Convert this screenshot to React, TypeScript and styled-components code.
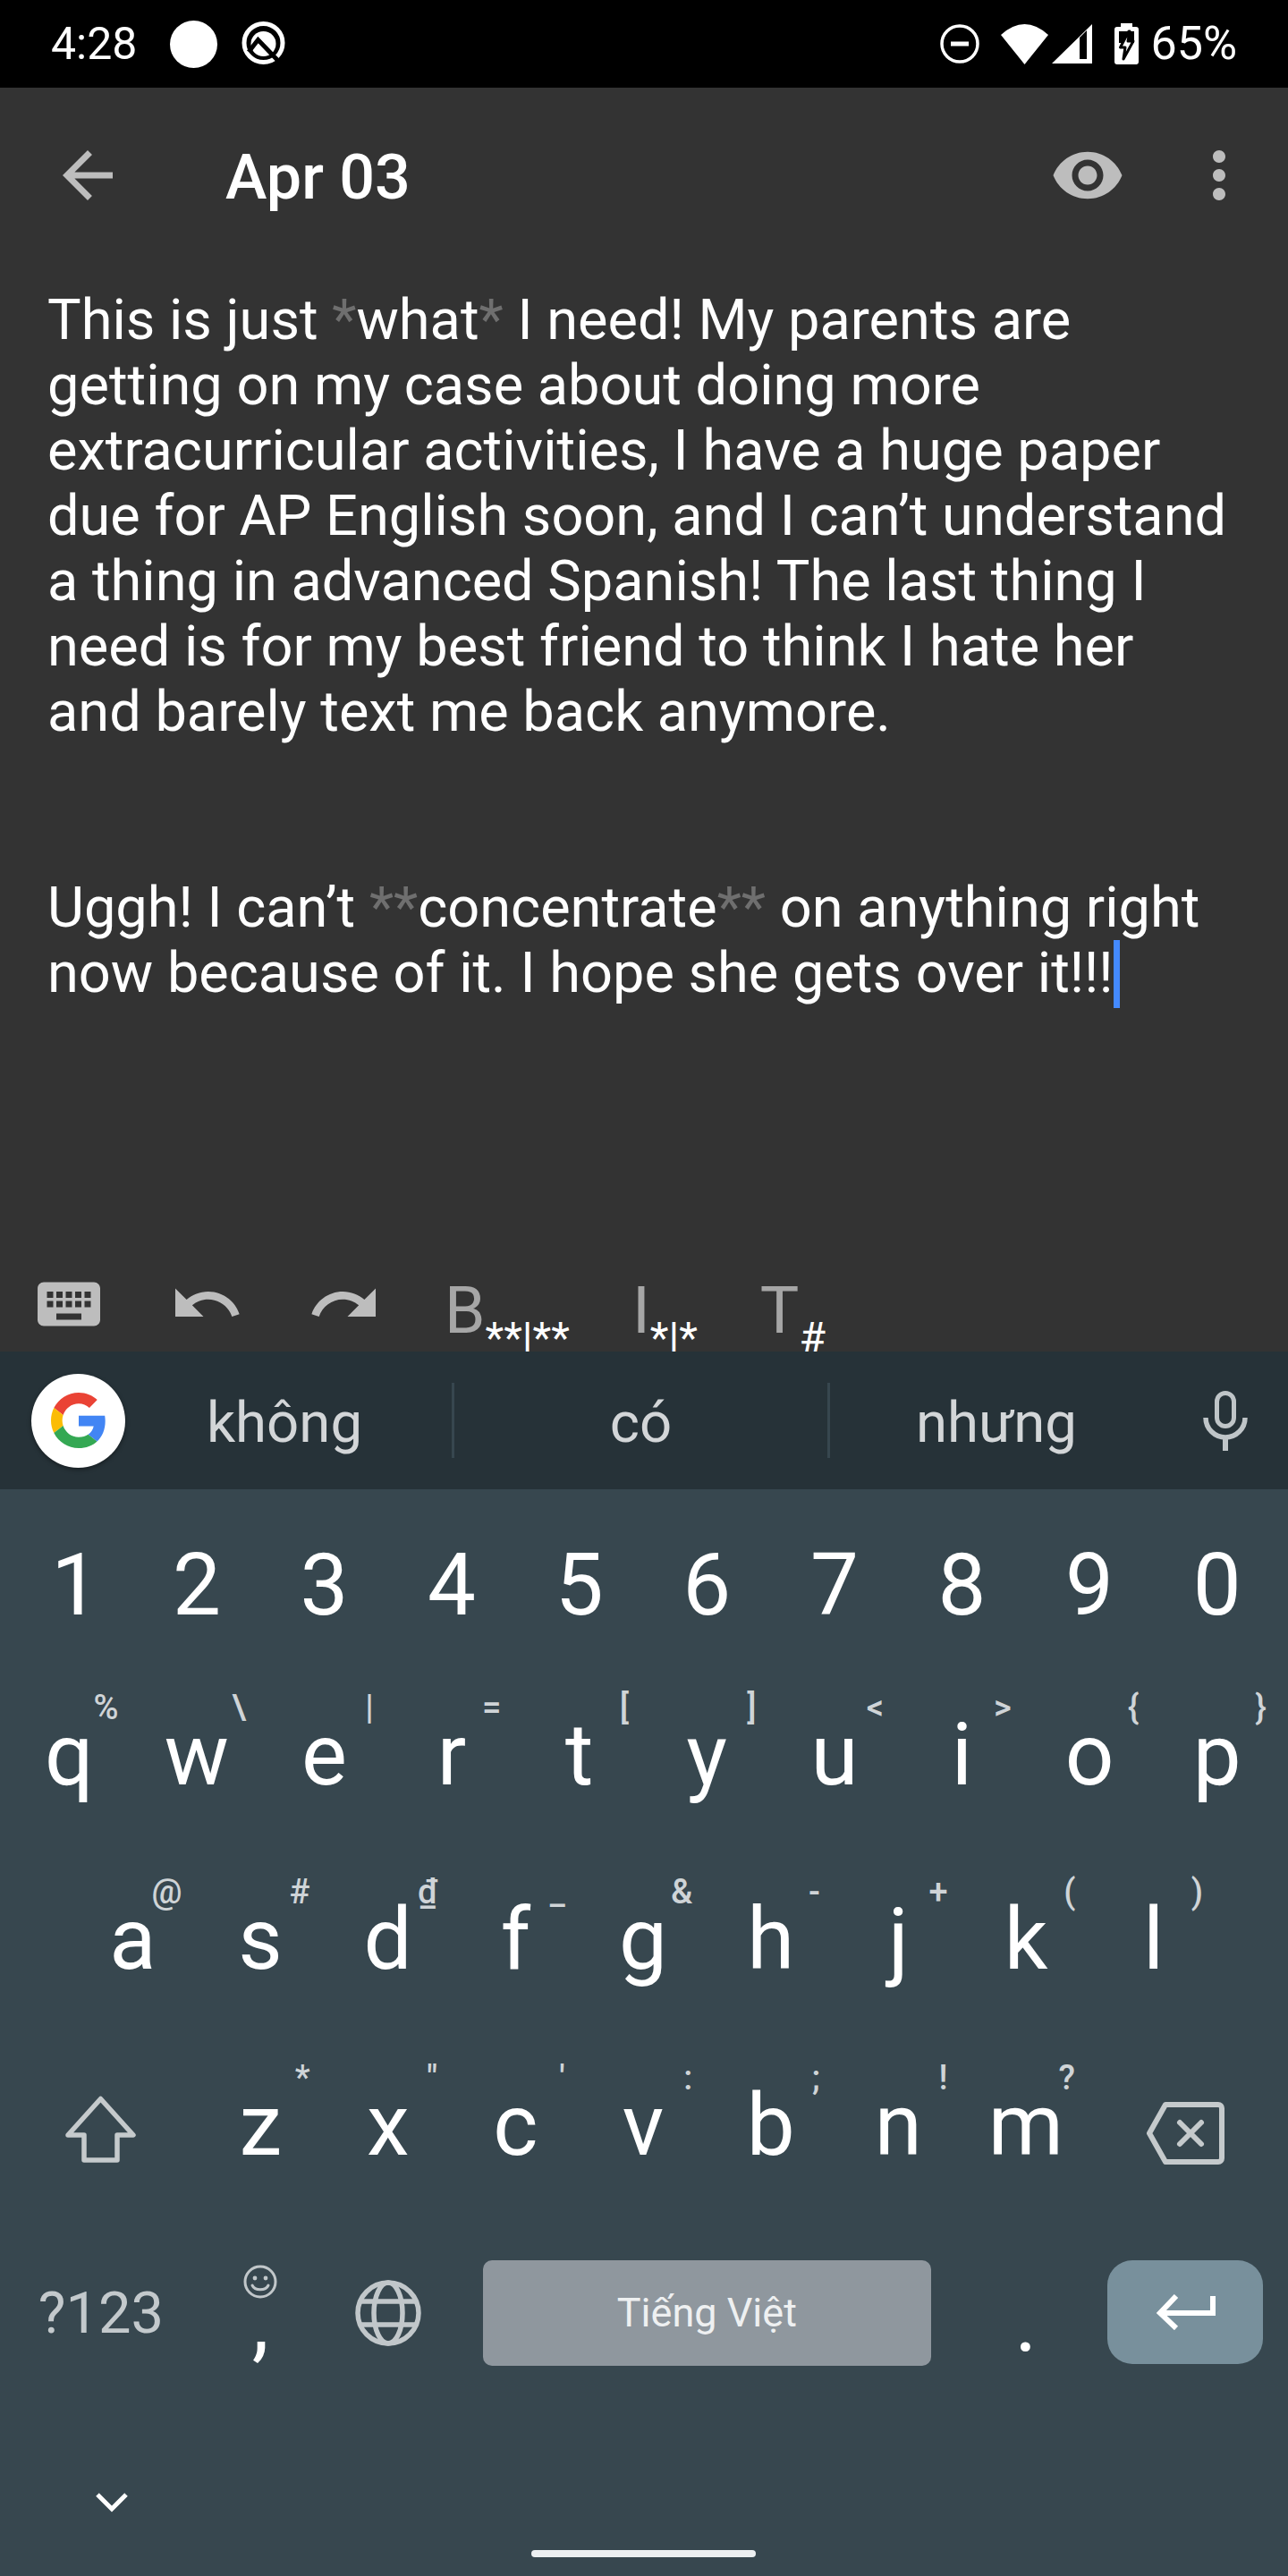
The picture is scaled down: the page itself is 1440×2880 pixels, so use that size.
import React from 'react';
import styled, { createGlobalStyle } from 'styled-components';

const Global = createGlobalStyle`
  html, body { margin: 0; padding: 0; background: #333333; }
  * { box-sizing: border-box; }
  #root { width: 1440px; height: 2880px; }
`;

const Screen = styled.div`
  width: 1440px;
  height: 2880px;
  display: flex;
  flex-direction: column;
  overflow: hidden;
  background: #333333;
  font-family: Roboto, "Noto Sans", sans-serif;
  color: #ffffff;
`;

/* Status bar */
const StatusBar = styled.div`
  height: 98px;
  flex: none;
  background: #000000;
  display: flex;
  align-items: center;
  padding: 0 57px;
`;
const StatusText = styled.span<{ $size?: number; $left?: number }>`
  font-size: ${(p) => p.$size ?? 50}px;
  line-height: 98px;
  margin-left: ${(p) => p.$left ?? 0}px;
`;
const Dot = styled.span`
  width: 53px;
  height: 53px;
  margin-left: 37px;
  border-radius: 50%;
  background: #ffffff;
`;
const StatusGlyph = styled.svg<{ $left?: number }>`
  flex: none;
  display: block;
  margin-left: ${(p) => p.$left ?? 0}px;
`;
const Spacer = styled.div`
  flex: 1;
`;

/* App toolbar */
const Toolbar = styled.div`
  height: 196px;
  flex: none;
  display: flex;
  align-items: center;
  padding: 0 35px 0 56px;
`;
const ToolIcon = styled.svg<{ $left?: number }>`
  width: 84px;
  height: 84px;
  flex: none;
  fill: #bdbdbd;
  margin-left: ${(p) => p.$left ?? 0}px;
`;
const Title = styled.h1`
  margin: 4px 0 0 112px;
  font-size: 70px;
  font-weight: 500;
  line-height: 84px;
`;

/* Editor */
const Editor = styled.div`
  height: 1122px;
  flex: none;
  padding: 27px 0 0 53px;
  font-size: 63.1px;
  line-height: 73px;
`;
const Line = styled.div`
  white-space: pre;
  min-height: 73px;
`;
const Mark = styled.span`
  color: #6f6f6f;
`;
const Caret = styled.span`
  display: inline-block;
  width: 7px;
  height: 76px;
  margin-bottom: -3px;
  vertical-align: top;
  background: #448aff;
`;

/* Formatting bar */
const FormatBar = styled.div`
  height: 95px;
  flex: none;
  display: flex;
  align-items: flex-start;
  gap: 70px;
  padding-left: 35px;
  overflow: hidden;
`;
const FormatIcon = styled.svg`
  width: 84px;
  height: 84px;
  flex: none;
  fill: #bdbdbd;
`;
const FormatGroup = styled.div`
  display: flex;
  align-items: flex-start;
  flex: none;
`;
const FormatLetter = styled.span`
  margin-top: 13px;
  font-size: 73px;
  line-height: 73px;
  color: #a6a6a6;
`;
const FormatSub = styled.span`
  margin-top: 56px;
  font-size: 48px;
  line-height: 48px;
  color: #ffffff;
`;

/* Suggestion strip */
const Strip = styled.div`
  height: 154px;
  flex: none;
  background: #263238;
  display: flex;
  align-items: center;
  padding-left: 35px;
`;
const GoogleBadge = styled.div`
  width: 105px;
  height: 105px;
  flex: none;
  border-radius: 50%;
  background: #ffffff;
  box-shadow: 0 2px 5px rgba(0, 0, 0, 0.4);
  display: flex;
  align-items: center;
  justify-content: center;
`;
const Suggestion = styled.div<{ $width: number; $trail?: number }>`
  width: ${(p) => p.$width}px;
  flex: none;
  padding: 6px ${(p) => p.$trail ?? 0}px 0 0;
  text-align: center;
  font-size: 63.5px;
  line-height: 70px;
  color: #d3d6d8;
`;
const Divider = styled.div`
  width: 3px;
  height: 84px;
  flex: none;
  background: #37474f;
`;

/* Keyboard */
const Keyboard = styled.div`
  height: 1215px;
  flex: none;
  background: #37474f;
  padding: 59px 8px 0 6px;
  display: flex;
  flex-direction: column;
`;
const KeyRow = styled.div<{ $height: number; $inset?: number }>`
  height: ${(p) => p.$height}px;
  flex: none;
  display: flex;
  align-items: flex-start;
  padding: 0 ${(p) => p.$inset ?? 0}px;
`;
const Key = styled.div<{ $units?: number; $drop?: number; $indent?: number }>`
  flex: ${(p) => p.$units ?? 1} 0 0;
  min-width: 0;
  position: relative;
  padding-top: ${(p) => p.$drop ?? 0}px;
  text-indent: ${(p) => p.$indent ?? 0}px;
  text-align: center;
  font-size: 96px;
  line-height: 96px;
  color: #ffffff;
`;
const Hint = styled.span`
  position: absolute;
  top: -24px;
  right: 16px;
  font-size: 38px;
  line-height: 38px;
  font-weight: 500;
  color: #cfd4d7;
`;
const IconKey = styled.div<{ $units?: number; $height?: number }>`
  flex: ${(p) => p.$units ?? 1} 0 0;
  min-width: 0;
  height: ${(p) => p.$height ?? 118}px;
  display: flex;
  align-items: center;
  justify-content: center;
`;
const KeyGlyph = styled.svg`
  display: block;
  flex: none;
`;
const SymbolsKey = styled.div`
  flex: 1.5 0 0;
  min-width: 0;
  text-align: center;
  font-size: 65px;
  line-height: 118px;
  color: #c3c9cc;
`;
const SpaceCell = styled.div`
  flex: 4 0 0;
  min-width: 0;
`;
const SpaceBar = styled.div`
  height: 118px;
  margin: 0 35px;
  border-radius: 10px;
  background: #8f979e;
  text-align: center;
  font-size: 45px;
  line-height: 118px;
  color: #eef0f1;
`;
const EnterCell = styled.div`
  flex: 1.5 0 0;
  min-width: 0;
`;
const EnterBar = styled.div`
  height: 116px;
  margin: 0 20px;
  border-radius: 28px;
  background: #78909c;
  display: flex;
  align-items: center;
  justify-content: center;
`;
const EmojiMark = styled.svg`
  position: absolute;
  top: 5px;
  left: 50%;
  margin-left: -19px;
`;
const HideRow = styled.div`
  margin-top: 61px;
  padding-left: 101px;
  height: 20px;
`;
const HomePill = styled.div`
  width: 251px;
  height: 8px;
  margin: 44px auto 0;
  border-radius: 4px;
  background: #eceff1;
`;

const digits = '1234567890'.split('');
const row2 = [['q', '%'], ['w', '\\'], ['e', '|'], ['r', '='], ['t', '['], ['y', ']'], ['u', '<'], ['i', '>'], ['o', '{'], ['p', '}']];
const row3 = [['a', '@'], ['s', '#'], ['d', '₫'], ['f', '_'], ['g', '&'], ['h', '-'], ['j', '+'], ['k', '('], ['l', ')']];
const row4 = [['z', '*'], ['x', '"'], ['c', "'"], ['v', ':'], ['b', ';'], ['n', '!'], ['m', '?']];

const LetterKey = ({ label, hint }: { label: string; hint: string }) => (
  <Key>
    {label}
    <Hint>{hint}</Hint>
  </Key>
);

export default function App() {
  return (
    <Screen>
      <Global />
      <StatusBar>
        <StatusText>4:28</StatusText>
        <Dot />
        <StatusGlyph $left={27} width="50" height="50" viewBox="10 8 50 50">
          <circle cx="34.5" cy="32" r="21.5" fill="none" stroke="#fff" strokeWidth="5" />
          <circle cx="34.5" cy="33" r="14" fill="#fff" />
          <path d="M18 42 L28.5 28.5 L52 53" fill="none" stroke="#000" strokeWidth="5" />
        </StatusGlyph>
        <Spacer />
        <StatusGlyph width="44" height="44" viewBox="0 0 44 44">
          <circle cx="22" cy="22" r="20" fill="none" stroke="#fff" strokeWidth="3.5" />
          <rect x="12" y="19.5" width="20" height="5" fill="#fff" />
        </StatusGlyph>
        <StatusGlyph $left={24} width="53" height="45" viewBox="0 0 53 45">
          <path d="M0 12 Q26.5 -12 53 12 L26.5 45 Z" fill="#fff" />
        </StatusGlyph>
        <StatusGlyph $left={4} width="45" height="44" viewBox="0 0 45 44">
          <path fillRule="evenodd" d="M45 0 V44 H0 Z M31 15 V39 H39 V7 Z" fill="#fff" />
        </StatusGlyph>
        <StatusGlyph $left={25} width="27" height="46" viewBox="0 0 27 46">
          <path d="M7 0 H20 V4 H24 a3 3 0 0 1 3 3 V43 a3 3 0 0 1 -3 3 H3 a3 3 0 0 1 -3 -3 V7 a3 3 0 0 1 3 -3 H7 Z" fill="#fff" />
          <rect x="5" y="9" width="17" height="13" fill="#000" />
          <path d="M16 9 L6.5 27 H12 L10 40 L21 20 H15 L17 9 Z" fill="#fff" stroke="#000" strokeWidth="3" strokeLinejoin="round" />
        </StatusGlyph>
        <StatusText $size={52} $left={13}>65%</StatusText>
      </StatusBar>

      <Toolbar>
        <ToolIcon viewBox="0 0 24 24">
          <path d="M20 11H7.83l5.59-5.59L12 4l-8 8 8 8 1.41-1.41L7.83 13H20v-2z" />
        </ToolIcon>
        <Title>Apr 03</Title>
        <Spacer />
        <ToolIcon viewBox="0 0 24 24">
          <path d="M12 4.5C7 4.5 2.73 7.61 1 12c1.73 4.39 6 7.5 11 7.5s9.27-3.11 11-7.5c-1.73-4.39-6-7.5-11-7.5zM12 17c-2.76 0-5-2.24-5-5s2.24-5 5-5 5 2.24 5 5-2.24 5-5 5zm0-8c-1.66 0-3 1.34-3 3s1.34 3 3 3 3-1.34 3-3-1.34-3-3-3z" />
        </ToolIcon>
        <ToolIcon $left={63} viewBox="0 0 24 24">
          <path d="M12 8c1.1 0 2-.9 2-2s-.9-2-2-2-2 .9-2 2 .9 2 2 2zm0 2c-1.1 0-2 .9-2 2s.9 2 2 2 2-.9 2-2-.9-2-2-2zm0 6c-1.1 0-2 .9-2 2s.9 2 2 2 2-.9 2-2-.9-2-2-2z" />
        </ToolIcon>
      </Toolbar>

      <Editor>
        <Line>This is just <Mark>*</Mark>what<Mark>*</Mark> I need! My parents are</Line>
        <Line>getting on my case about doing more</Line>
        <Line>extracurricular activities, I have a huge paper</Line>
        <Line>due for AP English soon, and I can’t understand</Line>
        <Line>a thing in advanced Spanish! The last thing I</Line>
        <Line>need is for my best friend to think I hate her</Line>
        <Line>and barely text me back anymore.</Line>
        <Line />
        <Line />
        <Line>Uggh! I can’t <Mark>**</Mark>concentrate<Mark>**</Mark> on anything right</Line>
        <Line>now because of it. I hope she gets over it!!!<Caret /></Line>
      </Editor>

      <FormatBar>
        <FormatIcon viewBox="0 0 24 24">
          <path d="M20 5H4c-1.1 0-1.99.9-1.99 2L2 17c0 1.1.9 2 2 2h16c1.1 0 2-.9 2-2V7c0-1.1-.9-2-2-2zm-9 3h2v2h-2V8zm0 3h2v2h-2v-2zM8 8h2v2H8V8zm0 3h2v2H8v-2zm-1 2H5v-2h2v2zm0-3H5V8h2v2zm9 7H8v-2h8v2zm0-4h-2v-2h2v2zm0-3h-2V8h2v2zm3 3h-2v-2h2v2zm0-3h-2V8h2v2z" />
        </FormatIcon>
        <FormatIcon viewBox="0 0 24 24">
          <path d="M12.5 8c-2.65 0-5.05.99-6.9 2.6L2 7v9h9l-3.62-3.62c1.39-1.16 3.16-1.88 5.12-1.88 3.54 0 6.55 2.31 7.6 5.5l2.37-.78C21.08 11.03 17.15 8 12.5 8z" />
        </FormatIcon>
        <FormatIcon viewBox="0 0 24 24">
          <path d="M18.4 10.6C16.55 8.99 14.15 8 11.5 8c-4.65 0-8.58 3.03-9.96 7.22L3.9 16c1.05-3.19 4.05-5.5 7.6-5.5 1.95 0 3.73.72 5.12 1.88L13 16h9V7l-3.6 3.6z" />
        </FormatIcon>
        <FormatGroup><FormatLetter>B</FormatLetter><FormatSub>**|**</FormatSub></FormatGroup>
        <FormatGroup><FormatLetter>I</FormatLetter><FormatSub>*|*</FormatSub></FormatGroup>
        <FormatGroup><FormatLetter>T</FormatLetter><FormatSub>#</FormatSub></FormatGroup>
      </FormatBar>

      <Strip>
        <GoogleBadge>
          <svg width="62" height="62" viewBox="0 0 48 48">
            <path fill="#EA4335" d="M24 9.5c3.54 0 6.71 1.22 9.21 3.6l6.85-6.85C35.9 2.38 30.47 0 24 0 14.62 0 6.51 5.38 2.56 13.22l7.98 6.19C12.43 13.72 17.74 9.5 24 9.5z" />
            <path fill="#4285F4" d="M46.98 24.55c0-1.57-.15-3.09-.38-4.55H24v9.02h12.94c-.58 2.96-2.26 5.48-4.78 7.18l7.73 6c4.51-4.18 7.09-10.36 7.09-17.65z" />
            <path fill="#FBBC05" d="M10.53 28.59c-.48-1.45-.76-2.99-.76-4.59s.27-3.14.76-4.59l-7.98-6.19C.92 16.46 0 20.12 0 24c0 3.88.92 7.54 2.56 10.78l7.97-6.19z" />
            <path fill="#34A853" d="M24 48c6.48 0 11.93-2.13 15.89-5.81l-7.73-6c-2.15 1.45-4.92 2.3-8.16 2.3-6.26 0-11.57-4.22-13.47-9.91l-7.98 6.19C6.51 42.62 14.62 48 24 48z" />
          </svg>
        </GoogleBadge>
        <Suggestion $width={365} $trail={9}>không</Suggestion>
        <Divider />
        <Suggestion $width={417}>có</Suggestion>
        <Divider />
        <Suggestion $width={372}>nhưng</Suggestion>
        <StatusGlyph $left={45} width="50" height="67" viewBox="0 0 50 67">
          <rect x="15.5" y="2.5" width="19" height="37" rx="9.5" fill="none" stroke="#bfc5c8" strokeWidth="5" />
          <path d="M3 30 a22 22 0 0 0 44 0" fill="none" stroke="#bfc5c8" strokeWidth="5.5" />
          <path d="M25 52 V67" stroke="#bfc5c8" strokeWidth="6" />
        </StatusGlyph>
      </Strip>

      <Keyboard>
        <KeyRow $height={190}>
          {digits.map((d) => <Key key={d} $indent={d === '1' ? 14 : 0}>{d}</Key>)}
        </KeyRow>
        <KeyRow $height={206}>
          {row2.map(([l, h]) => <LetterKey key={l} label={l} hint={h} />)}
        </KeyRow>
        <KeyRow $height={208} $inset={71}>
          {row3.map(([l, h]) => <LetterKey key={l} label={l} hint={h} />)}
        </KeyRow>
        <KeyRow $height={199}>
          <IconKey $units={1.5} $height={104}>
            <KeyGlyph width="79" height="75" viewBox="0 0 79 75" fill="none" stroke="#c5cacc" strokeWidth="5.5" strokeLinejoin="round">
              <path d="M39.5 3.5 L76 44 H58 V72 H21 V44 H3 Z" />
            </KeyGlyph>
          </IconKey>
          {row4.map(([l, h]) => <LetterKey key={l} label={l} hint={h} />)}
          <IconKey $units={1.5} $height={114}>
            <KeyGlyph width="87" height="70" viewBox="0 0 87 70" fill="none" stroke="#c5cacc" strokeWidth="6" strokeLinejoin="round">
              <path d="M21 3 H80 a4 4 0 0 1 4 4 V63 a4 4 0 0 1 -4 4 H21 L3 35 Z" />
              <path d="M37 23 L61 47 M61 23 L37 47" strokeLinecap="round" />
            </KeyGlyph>
          </IconKey>
        </KeyRow>
        <KeyRow $height={199}>
          <SymbolsKey>?123</SymbolsKey>
          <Key $drop={20}>
            ,
            <EmojiMark width="38" height="38" viewBox="0 0 38 38" fill="none" stroke="#c1c7ca" strokeWidth="3">
              <circle cx="19" cy="19" r="17" />
              <circle cx="13" cy="15" r="2.4" fill="#c1c7ca" stroke="none" />
              <circle cx="25" cy="15" r="2.4" fill="#c1c7ca" stroke="none" />
              <path d="M10 23 a9.5 7 0 0 0 18 0" strokeLinecap="round" />
            </EmojiMark>
          </Key>
          <IconKey>
            <KeyGlyph width="74" height="74" viewBox="0 0 74 74" fill="none" stroke="#c1c7ca" strokeWidth="5.5">
              <circle cx="37" cy="37" r="34" />
              <ellipse cx="37" cy="37" rx="16" ry="34" />
              <path d="M6 24 H68 M6 50 H68" />
            </KeyGlyph>
          </IconKey>
          <SpaceCell><SpaceBar>Tiếng Việt</SpaceBar></SpaceCell>
          <Key $drop={20}>.</Key>
          <EnterCell>
            <EnterBar>
              <KeyGlyph width="67" height="40" viewBox="0 0 67 40" fill="none" stroke="#ffffff" strokeWidth="6">
                <path d="M64 2 V21 H6" />
                <path d="M23 2 L5 21 L23 38" />
              </KeyGlyph>
            </EnterBar>
          </EnterCell>
        </KeyRow>
        <HideRow>
          <KeyGlyph width="36" height="22" viewBox="0 0 36 22" fill="none" stroke="#ffffff" strokeWidth="5">
            <path d="M2 2 L18 18 L34 2" />
          </KeyGlyph>
        </HideRow>
        <HomePill />
      </Keyboard>
    </Screen>
  );
}
